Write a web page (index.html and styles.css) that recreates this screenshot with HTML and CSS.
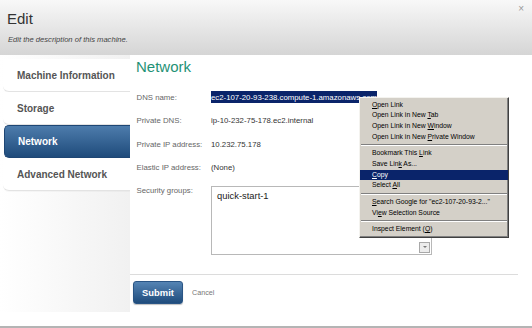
FILE: index.html
```html
<!DOCTYPE html>
<html lang="en">
<head>
<meta charset="UTF-8" />
<title>Edit machine</title>
<link rel="stylesheet" href="styles.css">
</head>
<body>
  <div class="dialog">
    <header class="dialog-head">
      <h1>Edit</h1>
      <p>Edit the description of this machine.</p>
      <span class="close">&#215;</span>
    </header>

    <div class="dialog-body">
      <nav class="side">
        <div class="nav-item">Machine Information</div>
        <div class="nav-item">Storage</div>
        <div class="nav-item active">Network</div>
        <div class="nav-item">Advanced Network</div>
      </nav>

      <main class="content">
        <h2>Network</h2>
        <div class="form">
          <div class="row">
            <span class="label">DNS name:</span>
            <span class="value"><span class="selected">ec2-107-20-93-238.compute-1.amazonaws.com</span></span>
          </div>
          <div class="row">
            <span class="label">Private DNS:</span>
            <span class="value">ip-10-232-75-178.ec2.internal</span>
          </div>
          <div class="row">
            <span class="label">Private IP address:</span>
            <span class="value">10.232.75.178</span>
          </div>
          <div class="row">
            <span class="label">Elastic IP address:</span>
            <span class="value">(None)</span>
          </div>
          <div class="row row-groups">
            <span class="label">Security groups:</span>
            <div class="groups-box">
              quick-start-1
              <span class="scroll-btn"></span>
            </div>
          </div>
        </div>
        <div class="actions">
          <button class="submit-btn">Submit</button>
          <a class="cancel">Cancel</a>
        </div>
      </main>
    </div>

    <!-- menu contextual del navegador, encima del formulario -->
    <ul class="context-menu">
      <li><u>O</u>pen Link</li>
      <li>Open Link in New <u>T</u>ab</li>
      <li>Open Link in New <u>W</u>indow</li>
      <li>Open Link in New <u>P</u>rivate Window</li>
      <li class="sep"></li>
      <li>Bookmark This <u>L</u>ink</li>
      <li>Save Lin<u>k</u> As...</li>
      <li class="hover"><u>C</u>opy</li>
      <li>Select <u>A</u>ll</li>
      <li class="sep"></li>
      <li><u>S</u>earch Google for "ec2-107-20-93-2..."</li>
      <li>Vi<u>e</u>w Selection Source</li>
      <li class="sep"></li>
      <li>Inspect Element (<u>Q</u>)</li>
    </ul>
  </div>
</body>
</html>
```

FILE: styles.css
```css
body {
  margin: 0;
  font-family: 'Liberation Sans', Arial, sans-serif;
  background: #fff;
}
.dialog {
  position: relative;
  width: 532px;
  height: 326px;
  border-bottom: 2px solid #b4b4b4;
  background: #fff;
}
.dialog-head {
  position: relative;
  height: 55px;
  padding: 10px 0 0 7px;
  box-sizing: border-box;
  background: linear-gradient(#f8f8f8, #d5d5d5);
}
.dialog-head h1 {
  margin: 0;
  font-size: 15px;
  line-height: 18px;
  font-weight: normal;
  color: #333;
}
.dialog-head p {
  margin: 7px 0 0 1px;
  font-size: 7.6px;
  line-height: 10px;
  font-style: italic;
  color: #444;
}
.close {
  position: absolute;
  top: 3px;
  right: 8px;
  font-size: 10px;
  color: #999;
}
.dialog-body {
  display: flex;
}
.side {
  width: 130px;
  height: 257px;
  padding-top: 4px;
  box-sizing: border-box;
  background: linear-gradient(90deg, #fff, #f1f1f1);
}
.nav-item {
  margin-left: 3px;
  height: 33px;
  padding-left: 14px;
  box-sizing: border-box;
  border-bottom: 1px solid #e3e3e3;
  border-bottom-left-radius: 6px;
  box-shadow: 0 1px 1px rgba(0,0,0,0.03);
  background: #fff;
  display: flex;
  align-items: center;
  font-size: 10px;
  font-weight: bold;
  color: #555;
}
.nav-item.active {
  margin-left: 4px;
  padding-left: 13px;
  border: 1px solid #1e4674;
  border-right: none;
  border-radius: 5px 0 0 5px;
  background: linear-gradient(#4d7cac, #1f4b7b);
  color: #fff;
  box-shadow: none;
}
.content {
  flex: 1;
  margin-right: 14px;
  padding-top: 3px;
}
.content h2 {
  margin: 0 0 0 6px;
  font-size: 15px;
  line-height: 18px;
  font-weight: normal;
  color: #1f9276;
}
.form {
  margin: 9.6px 0 0 6.5px;
  font-size: 7.8px;
}
.row {
  display: flex;
  height: 23.4px;
  align-items: center;
}
.label {
  width: 74.5px;
  color: #666;
}
.value {
  color: #333;
}
.selected {
  background: #0a246a;
  color: #fff;
  padding: 1.5px 0;
}
.row-groups {
  align-items: flex-start;
  height: auto;
  line-height: 23.4px;
}
.groups-box {
  position: relative;
  margin-top: 6.8px;
  width: 221px;
  height: 69px;
  box-sizing: border-box;
  border: 1px solid #b8b8b8;
  padding: 3px 5px;
  font-size: 9.4px;
  line-height: 12px;
  color: #222;
}
.scroll-btn {
  position: absolute;
  right: 1px;
  bottom: 1px;
  width: 9px;
  height: 9px;
  border: 1px solid #a8a8a8;
  background: #ececec;
}
.scroll-btn::after {
  content: '';
  position: absolute;
  left: 2.5px;
  top: 3.5px;
  border-left: 2px solid transparent;
  border-right: 2px solid transparent;
  border-top: 2px solid #777;
}
.actions {
  margin-top: 19px;
  border-top: 1px solid #dcdcdc;
  padding: 6.5px 0 0 3px;
  display: flex;
  align-items: center;
  gap: 9px;
}
.submit-btn {
  width: 50px;
  height: 23px;
  border: 1px solid #2a5585;
  border-radius: 3px;
  background: linear-gradient(#5584b4, #1f4c7c);
  box-shadow: 0 1px 1px rgba(0,0,0,0.25);
  color: #fff;
  font-family: inherit;
  font-size: 9.4px;
  font-weight: bold;
  padding: 0;
}
.cancel {
  font-size: 7.2px;
  color: #777;
}

/* menu contextual */
.context-menu {
  position: absolute;
  left: 359px;
  top: 97px;
  width: 150px;
  margin: 0;
  padding: 1.5px 0;
  box-sizing: border-box;
  list-style: none;
  background: #d4d0c8;
  border: 1px solid;
  border-color: #f4f3ef #404040 #404040 #f4f3ef;
  box-shadow: inset -1px -1px 0 #808080;
  font-size: 6.8px;
  color: #000;
}
.context-menu li {
  height: 10.7px;
  line-height: 10.7px;
  padding-left: 12px;
}
.context-menu li.hover {
  background: #0a246a;
  color: #fff;
}
.context-menu li.sep {
  height: 0;
  padding: 0;
  margin: 2px 1px;
  border-top: 1px solid #808080;
  border-bottom: 1px solid #fff;
}
```
